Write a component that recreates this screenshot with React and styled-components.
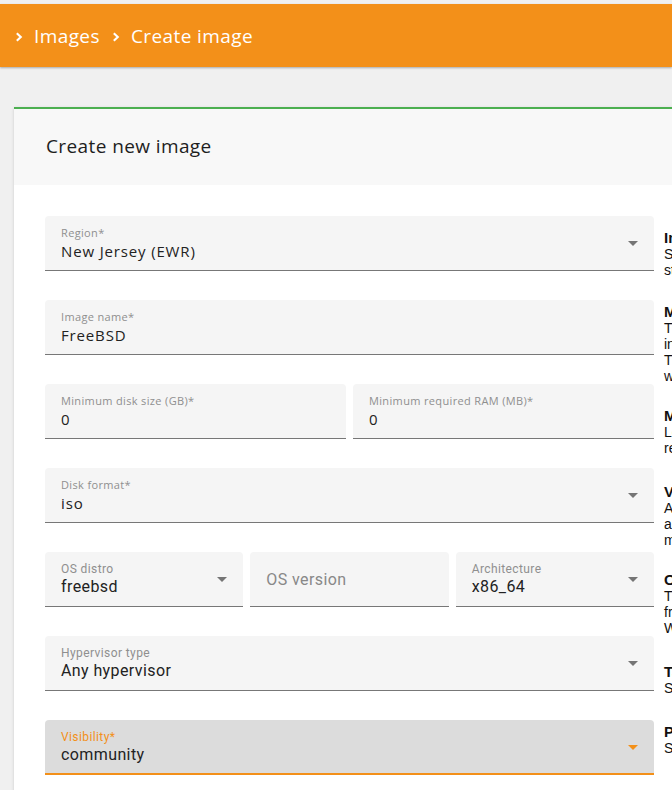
import React from "react";
import styled, { createGlobalStyle } from "styled-components";

// form description, rows of fields + help blurbs on the right
const rows = [
  [{ label: "Region*", value: "New Jersey (EWR)", select: true }],
  [{ label: "Image name*", value: "FreeBSD" }],
  [
    { label: "Minimum disk size (GB)*", value: "0" },
    { label: "Minimum required RAM (MB)*", value: "0" },
  ],
  [{ label: "Disk format*", value: "iso", select: true }],
  [
    { label: "OS distro", value: "freebsd", select: true, roboto: true },
    { placeholder: "OS version", roboto: true },
    { label: "Architecture", value: "x86_64", select: true, roboto: true },
  ],
  [{ label: "Hypervisor type", value: "Any hypervisor", select: true, roboto: true }],
  [{ label: "Visibility*", value: "community", select: true, roboto: true, focused: true }],
];

const helps = [
  { top: 14, title: "Image region", lines: ["Select the region where the image will be", "stored."] },
  {
    top: 26,
    title: "Meaningful name",
    lines: ["The name of the image as shown", "in the image list.", "The name may be changed later", "without affecting instances."],
  },
  { top: 24, title: "Minimum requirements", lines: ["Leave zero if there are no", "requirements."] },
  { top: 28, title: "Virtual disk format", lines: ["A format of the disk image file,", "all of QCOW2, RAW and ISO", "may be used."] },
  { top: 24, title: "Operating system", lines: ["The OS information taken", "from the image metadata.", "We use it to pick defaults."] },
  { top: 28, title: "Target hypervisor", lines: ["Select the hypervisor type."] },
  { top: 28, title: "Publicity", lines: ["Set who can see this image."] },
];

function Field({ f }) {
  return (
    <FieldBox focused={f.focused ? "true" : undefined}>
      {f.placeholder ? (
        <Placeholder>{f.placeholder}</Placeholder>
      ) : (
        <>
          <Label roboto={f.roboto ? "true" : undefined} focused={f.focused ? "true" : undefined}>
            {f.label}
          </Label>
          <Value roboto={f.roboto ? "true" : undefined}>{f.value}</Value>
        </>
      )}
      {f.select && <Arrow focused={f.focused ? "true" : undefined} />}
    </FieldBox>
  );
}

function Chevron() {
  return (
    <svg width="8" height="10" viewBox="0 0 8 10">
      <polyline points="1.8,1.2 5.8,5 1.8,8.8" fill="none" stroke="#fff" strokeWidth="2.1" />
    </svg>
  );
}

export default function App() {
  return (
    <>
      <GlobalStyle />
      <TopBar>
        <Crumb>
          <Chevron />
          Images
        </Crumb>
        <Crumb>
          <Chevron />
          Create image
        </Crumb>
      </TopBar>

      <Card>
        <CardHeader>Create new image</CardHeader>
        <CardBody>
          <Fields>
            {rows.map((row, i) => (
              <Row key={i} cols={row.length}>
                {row.map((f, j) => (
                  <Field f={f} key={j} />
                ))}
              </Row>
            ))}
          </Fields>
          <Helps>
            {helps.map((h, i) => (
              <Help key={i} top={h.top}>
                <HelpTitle>{h.title}</HelpTitle>
                {h.lines.map((l, k) => (
                  <HelpLine key={k}>{l}</HelpLine>
                ))}
              </Help>
            ))}
          </Helps>
        </CardBody>
      </Card>
    </>
  );
}

// Style
const GlobalStyle = createGlobalStyle`
  html, body {
    margin: 0;
    padding: 0;
    background: #f0f0f0;
    overflow: hidden;
  }
  body {
    padding-top: 4px;
  }
`;

const TopBar = styled.header`
  height: 63px;
  background: #f39019;
  display: flex;
  align-items: center;
  padding: 1px 0 0 15px;
  box-sizing: border-box;
  gap: 12px;
  box-shadow: 0 1px 2px rgba(0, 0, 0, 0.3);
  font-family: "Open Sans", sans-serif;
  font-size: 19px;
  letter-spacing: 0.4px;
  color: #fff;
`;

const Crumb = styled.span`
  display: flex;
  align-items: center;
  gap: 11px;

  svg {
    margin-top: 1px;
  }
`;

const Card = styled.section`
  margin: 40px 0 0 14px;
  width: 1000px;
  background: #fff;
  border-top: 2px solid #4caf50;
  box-shadow: 0 1px 3px rgba(0, 0, 0, 0.15);
`;

const CardHeader = styled.div`
  height: 76px;
  background: #f8f8f8;
  display: flex;
  align-items: center;
  padding: 0 0 2px 32px;
  box-sizing: border-box;
  font-family: "Open Sans", sans-serif;
  font-size: 19px;
  font-weight: 500;
  letter-spacing: 0.4px;
  color: #1e1e1e;
`;

const CardBody = styled.div`
  display: flex;
  gap: 10px;
  padding: 31px 0 40px 31px;
`;

const Fields = styled.div`
  width: 609px;
  display: flex;
  flex-direction: column;
  gap: 29px;
`;

const Row = styled.div`
  display: grid;
  grid-template-columns: repeat(${(p) => p.cols}, 1fr);
  gap: 7px;
`;

const FieldBox = styled.div`
  position: relative;
  box-sizing: border-box;
  height: 55px;
  padding: 10px 16px 0;
  background: ${(p) => (p.focused ? "#dcdcdc" : "#f5f5f5")};
  border-radius: 4px 4px 0 0;
  border-bottom: ${(p) => (p.focused ? "2px solid #f39019" : "1px solid #777")};
`;

const Label = styled.div`
  font-family: ${(p) => (p.roboto ? "Roboto" : "'Open Sans'")}, sans-serif;
  font-size: ${(p) => (p.roboto ? "12px" : "11px")};
  letter-spacing: ${(p) => (p.roboto ? "0.4px" : "0.35px")};
  line-height: 14px;
  color: ${(p) => (p.focused ? "#f39019" : "#8f8f8f")};
`;

const Value = styled.div`
  margin-top: 2px;
  font-family: ${(p) => (p.roboto ? "Roboto" : "'Open Sans'")}, sans-serif;
  font-size: ${(p) => (p.roboto ? "16px" : "15px")};
  letter-spacing: ${(p) => (p.roboto ? "0.4px" : "0.85px")};
  line-height: 18px;
  color: #222;
`;

const Placeholder = styled.div`
  font-family: Roboto, sans-serif;
  font-size: 16px;
  letter-spacing: 0.4px;
  line-height: 36px;
  color: #888;
`;

const Arrow = styled.span`
  position: absolute;
  right: 16px;
  top: 25px;
  width: 0;
  height: 0;
  border-left: 5px solid transparent;
  border-right: 5px solid transparent;
  border-top: 5px solid ${(p) => (p.focused ? "#f39019" : "#757575")};
`;

const Helps = styled.div`
  display: flex;
  flex-direction: column;
  font-family: "Liberation Sans", Arial, sans-serif;
  font-size: 14px;
  line-height: 16px;
  color: #111;
`;

const Help = styled.div`
  margin-top: ${(p) => p.top}px;
`;

const HelpTitle = styled.div`
  font-weight: bold;
  font-size: 15px;
`;

const HelpLine = styled.div`
  white-space: nowrap;
`;
